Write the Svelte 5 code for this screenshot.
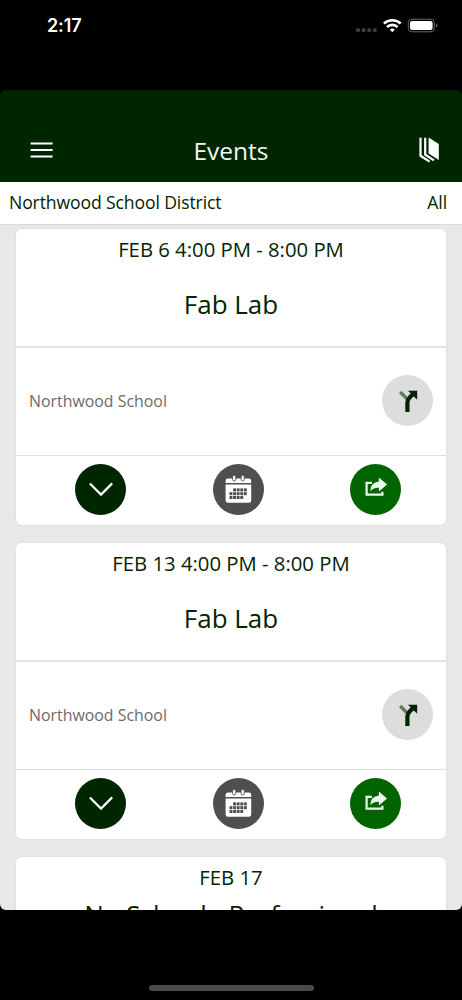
<script lang="ts">
	type SchoolEvent = {
		date: string;
		title: string;
		location: string;
	};

	const district = 'Northwood School District';

	const events: SchoolEvent[] = [
		{ date: 'FEB 6 4:00 PM - 8:00 PM', title: 'Fab Lab', location: 'Northwood School' },
		{ date: 'FEB 13 4:00 PM - 8:00 PM', title: 'Fab Lab', location: 'Northwood School' },
		{ date: 'FEB 17', title: 'No School - Professional Development', location: 'Northwood School' }
	];

	// Filled days of the calendar glyph, as [column, row].
	const days = [
		[1, 0], [2, 0], [3, 0], [4, 0],
		[0, 1], [1, 1], [2, 1], [3, 1], [4, 1],
		[0, 2], [1, 2], [2, 2], [3, 2]
	];
</script>

<div class="phone">
	<div class="status">
		<span class="status__time">2:17</span>
		<svg class="status__icons" width="84" height="18" viewBox="0 0 84 18" aria-hidden="true">
			<g fill="#3c3c3e">
				<circle cx="4" cy="13.2" r="2.1" />
				<circle cx="9.6" cy="13.2" r="2.1" />
				<circle cx="15.2" cy="13.2" r="2.1" />
				<circle cx="20.8" cy="13.2" r="2.1" />
			</g>
			<g fill="none" stroke="#fff" stroke-width="2.6">
				<path d="M29.9 6.5a12.4 12.4 0 0 1 16.8 0" />
				<path d="M33 10a7.6 7.6 0 0 1 10.6 0" />
			</g>
			<path d="M38.3 15.2l-2.5-2.6a3.6 3.6 0 0 1 5 0z" fill="#fff" />
			<rect x="54.3" y="2.2" width="26" height="12.6" rx="3.6" fill="none" stroke="#6a6a6a" />
			<rect x="56" y="4" width="22.6" height="9" rx="2" fill="#fff" />
			<path d="M82 6.4v4.2q1.5-.7 1.5-2.1t-1.5-2.1z" fill="#6a6a6a" />
		</svg>
	</div>

	<div class="app">
		<header class="bar">
			<button class="bar__btn" type="button" aria-label="Menu">
				<svg width="23" height="16" viewBox="0 0 23 16">
					<path d="M.6 1.4h22M.6 8h22M.6 14.6h22" stroke="#fff" stroke-width="2" />
				</svg>
			</button>
			<h1 class="bar__title">Events</h1>
			<button class="bar__btn bar__btn--right" type="button" aria-label="Schools">
				<svg width="20" height="26" viewBox="0 0 20 26">
					<path d="M9.6.4L19.8 7v16L9.6 16.6z" fill="#fff" />
					<path
						d="M6.2 .8v16.8l8.8 5.7M1.5 .8v18L10.6 24.6"
						fill="none"
						stroke="#fff"
						stroke-width="2.2"
					/>
				</svg>
			</button>
		</header>

		<div class="filter">
			<span>{district}</span>
			<span>All</span>
		</div>

		<main class="list">
			{#each events as event}
				<article class="card">
					<div class="card__head">
						<div class="card__date">{event.date}</div>
						<h2 class="card__title"><span>{event.title}</span></h2>
					</div>
					<div class="card__place">
						<span>{event.location}</span>
						<button class="round round--light" type="button" aria-label="Directions">
							<svg width="51" height="51" viewBox="0 0 51 51">
								<path d="M18.2 17l6.6 6.6" fill="none" stroke="#5c7c5c" stroke-width="3.4" />
								<path
									d="M25.4 37V27.6q0-3 2.2-5.2l4-4"
									fill="none"
									stroke="#002600"
									stroke-width="4.2"
								/>
								<path d="M26 15.7h9.2v9z" fill="#002600" />
							</svg>
						</button>
					</div>
					<div class="card__actions">
						<button class="round round--dark" type="button" aria-label="Show details">
							<svg width="51" height="51" viewBox="0 0 51 51">
								<path d="M14.9 19.4L26 30.6l11.2-11.2" fill="none" stroke="#fff" stroke-width="2.2" />
							</svg>
						</button>
						<button class="round round--grey" type="button" aria-label="Add to calendar">
							<svg width="51" height="51" viewBox="0 0 51 51">
								<path
									d="M15 14.4h20.8q2.4 0 2.4 2.4V19H12.6v-2.2q0-2.4 2.4-2.4zM12.6 20.6h25.6v15.8q0 2.4-2.4 2.4H15q-2.4 0-2.4-2.4z"
									fill="#fff"
								/>
								{#each [21.2, 29.7] as x}
									<rect
										x={x - 1.6}
										y="11.2"
										width="3.2"
										height="5.8"
										rx="1.6"
										fill="#fff"
										stroke="#4f4f4f"
										stroke-width=".9"
									/>
								{/each}
								{#each days as [col, row]}
									<rect
										x={16.5 + col * 3.6}
										y={24.4 + row * 3.8}
										width="2.9"
										height="3"
										fill="#4f4f4f"
									/>
								{/each}
							</svg>
						</button>
						<button class="round round--green" type="button" aria-label="Share">
							<svg width="51" height="51" viewBox="0 0 51 51">
								<path
									d="M21.9 18.9h-5.3v11.8h15.8v-3"
									fill="none"
									stroke="#eef5ee"
									stroke-width="2.2"
								/>
								<path
									d="M28.9 13.6l8.2 7-8.2 7v-3.9q-5.6-.4-8.6 3.5 .2-8.8 8.6-9.6z"
									fill="#eef5ee"
								/>
							</svg>
						</button>
					</div>
				</article>
			{/each}
		</main>
	</div>

	<div class="home"><span class="home__bar"></span></div>
</div>

<style>
	:global(body) {
		margin: 0;
		background: #000;
	}

	.phone {
		display: flex;
		flex-direction: column;
		width: 462px;
		height: 1000px;
		overflow: hidden;
		background: #000;
		color: #002600;
		font-family: 'Open Sans', 'Noto Sans', sans-serif;
	}

	.status {
		display: flex;
		flex: 0 0 90px;
		justify-content: space-between;
		box-sizing: border-box;
		padding: 14px 24px 0 47px;
	}

	.status__time {
		color: #fff;
		font: 600 18px/24px Inter, sans-serif;
		letter-spacing: -0.1px;
	}

	.status__icons {
		margin-top: 3px;
	}

	.app {
		display: flex;
		flex: 0 0 820px;
		flex-direction: column;
		overflow: hidden;
		border-radius: 6px;
		background: linear-gradient(#002600 92px, #e8e8e8 92px);
	}

	.bar {
		display: grid;
		flex: 0 0 92px;
		grid-template-columns: 1fr auto 1fr;
		align-items: center;
		box-sizing: border-box;
		padding: 28px 23px 0;
	}

	.bar__btn {
		display: flex;
		justify-self: start;
		margin-left: 7px;
		padding: 0;
		border: 0;
		background: none;
	}

	.bar__btn--right {
		justify-self: end;
	}

	.bar__title {
		margin: 2px 0 0;
		color: #f4f6f4;
		font-size: 24.5px;
		font-weight: 400;
		line-height: 34px;
	}

	.filter {
		display: flex;
		flex: 0 0 43px;
		justify-content: space-between;
		box-sizing: border-box;
		padding: 0 15px 0 9px;
		border-bottom: 1px solid #dcdcdc;
		background: #fff;
		font-size: 17.6px;
		letter-spacing: -0.12px;
		line-height: 40px;
	}

	.list {
		display: flex;
		flex: 1;
		flex-direction: column;
		gap: 16px;
		min-height: 0;
		padding: 3px 15px 0;
	}

	.card {
		flex: none;
		box-sizing: border-box;
		height: 298px;
		border: 1px solid #e0e0e0;
		border-radius: 7px;
		background: #fff;
	}

	.card__head {
		display: flex;
		flex-direction: column;
		box-sizing: border-box;
		height: 119px;
		border-bottom: 2px solid #e3e3e3;
		text-align: center;
	}

	.card__date {
		padding: 6px 0 1px;
		font-size: 20.3px;
		line-height: 28px;
	}

	.card__title {
		display: flex;
		flex: 1;
		align-items: center;
		justify-content: center;
		margin: -2px 50px 0;
		font-size: 26px;
		font-weight: 400;
		line-height: 36px;
	}

	.card__place {
		display: flex;
		align-items: center;
		justify-content: space-between;
		box-sizing: border-box;
		height: 108px;
		padding: 0 13px 2px;
		border-bottom: 1px solid #dedede;
		color: #6b6b6b;
		font-size: 15.9px;
	}

	.card__actions {
		display: flex;
		justify-content: space-between;
		padding: 8px 45px 0 59px;
	}

	.round {
		display: flex;
		align-items: center;
		justify-content: center;
		width: 51px;
		height: 51px;
		padding: 0;
		border: 0;
		border-radius: 50%;
	}

	.round--light {
		background: #ddd;
	}

	.round--dark {
		background: #002600;
	}

	.round--grey {
		background: #4f4f4f;
	}

	.round--green {
		background: #006400;
	}

	.home {
		display: flex;
		flex: 1;
		align-items: flex-end;
		justify-content: center;
		padding-bottom: 9px;
	}

	.home__bar {
		width: 165px;
		height: 6px;
		border-radius: 3px;
		background: #4a4a4a;
	}
</style>
